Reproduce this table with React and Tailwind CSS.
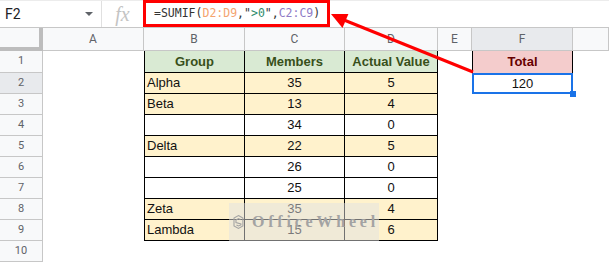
const COLS = 'grid grid-cols-[43px_101px_101px_100px_93px_34px_101px_1fr]';

const rows = [
  { b: 'Group', c: 'Members', d: 'Actual Value', head: true },
  { b: 'Alpha', c: '35', d: '5', y: true },
  { b: 'Beta', c: '13', d: '4', y: true },
  { b: '', c: '34', d: '0' },
  { b: 'Delta', c: '22', d: '5', y: true },
  { b: '', c: '26', d: '0' },
  { b: '', c: '25', d: '0' },
  { b: 'Zeta', c: '35', d: '4', y: true },
  { b: 'Lambda', c: '15', d: '6', y: true },
];

function RowHead({ n }) {
  return (
    <div
      className={`flex items-center justify-center border-r border-b border-[#c7c7c7] text-[11px] text-[#5f6368] font-['Roboto'] ${
        n === 2 ? 'bg-[#e8eaed]' : 'bg-[#f8f9fa]'
      }`}
    >
      {n}
    </div>
  );
}

function TableRow({ r, n }) {
  const bg = r.head ? 'bg-[#d9ead3]' : r.y ? 'bg-[#fff2cc]' : 'bg-white';
  const txt = r.head ? 'font-bold text-[#38501a]' : 'text-[#111]';
  return (
    <div className={`${COLS} ${n === 1 ? 'h-[22px]' : 'h-[21px]'}`}>
      <RowHead n={n} />
      <div />
      <div className={`flex items-center border-l border-r border-b border-black ${bg} ${txt} ${r.head ? 'justify-center' : 'pl-[2px]'}`}>
        {r.b}
      </div>
      <div className={`flex items-center justify-center border-r border-b border-black ${bg} ${txt}`}>{r.c}</div>
      <div className={`flex items-center justify-center border-r border-b border-black ${bg} ${txt}`}>{r.d}</div>
      <div />
      {n === 1 ? (
        <div className="flex items-center justify-center border-l border-r border-black bg-[#f4cccc] font-bold text-[#660000]">
          Total
        </div>
      ) : n === 2 ? (
        <div className="relative flex items-center justify-center text-[#111]">
          120
          <div className="absolute inset-0 border-2 border-[#1a73e8]" />
          <div className="absolute -right-[3px] -bottom-[3px] w-[6px] h-[6px] bg-[#1a73e8]" />
        </div>
      ) : (
        <div />
      )}
      <div />
    </div>
  );
}

export default function App() {
  return (
    <div className="relative w-[609px] h-[262px] overflow-hidden bg-white font-['Liberation_Sans'] text-[13px]">
      {/* formula bar */}
      <div className="flex h-[28px] border-t border-b border-t-[#ececec] border-b-[#c7c7c7]">
        <div className="w-[102px] flex items-center justify-between pl-[5px] pr-[8px] border-r border-[#e0e0e0]">
          <span className="font-['Roboto'] text-[14px] text-[#202124]">F2</span>
          <span className="w-0 h-0 border-l-[4px] border-r-[4px] border-t-[4px] border-l-transparent border-r-transparent border-t-[#5f6368]" />
        </div>
        <div className="w-[41px] flex items-center justify-center font-['Liberation_Serif'] italic text-[20px] text-[#c4c4c4]">
          fx
        </div>
        <div className="w-[187px] h-[27px] -mt-[1px] border-[3px] border-[#ff0000] flex items-center pl-[8px] font-['DejaVu_Sans_Mono'] text-[11.5px] text-[#333]">
          <span>=SUMIF(</span>
          <span className="text-[#f4a46f]">D2:D9</span>
          <span>,"</span>
          <span className="text-[#2e8b6a]">&gt;0</span>
          <span>",</span>
          <span className="text-[#8f7cc6]">C2:C9</span>
          <span>)</span>
        </div>
      </div>

      {/* column headers */}
      <div className={`${COLS} h-[23px] font-['Roboto'] text-[12px] text-[#5f6368]`}>
        <div className="bg-[#f8f9fa] border-r-4 border-b-4 border-[#bdbdbd]" />
        {['A', 'B', 'C', 'D', 'E', 'F', 'G'].map((l) => (
          <div
            key={l}
            className={`flex items-center justify-center border-r border-b border-[#c7c7c7] ${
              l === 'F' ? 'bg-[#e8eaed]' : 'bg-[#f8f9fa]'
            }`}
          >
            {l === 'G' ? '' : l}
          </div>
        ))}
      </div>

      {rows.map((r, i) => (
        <TableRow key={i} r={r} n={i + 1} />
      ))}
      <div className={`${COLS} h-[21px]`}>
        <RowHead n={10} />
      </div>

      {/* watermark */}
      <div className="absolute left-[229px] top-[203px] w-[150px] h-[38px] bg-[rgba(225,225,225,0.5)] flex items-center gap-[8px] pl-[4px]">
        <svg width="22" height="30" viewBox="0 0 22 30" fill="none" stroke="#a3a3a3" strokeWidth="2.2">
          <path d="M11 2 L20 7 L20 23 L11 28 L2 23 L2 7 Z" />
          <path d="M15 10 L11 8 L6 11 L6 16 L16 19 L16 21 L11 23 L7 21" />
        </svg>
        <span className="font-['Liberation_Serif'] font-bold text-[16px] tracking-[3.8px] text-[#a3a3a3]">
          OfficeWheel
        </span>
      </div>

      {/* arrow */}
      <svg className="absolute left-0 top-0" width="609" height="262">
        <line x1="473" y1="72" x2="344" y2="20" stroke="#ff0000" strokeWidth="3" />
        <polygon points="331,14 348.4,14 342.5,28" fill="#ff0000" />
      </svg>
    </div>
  );
}
